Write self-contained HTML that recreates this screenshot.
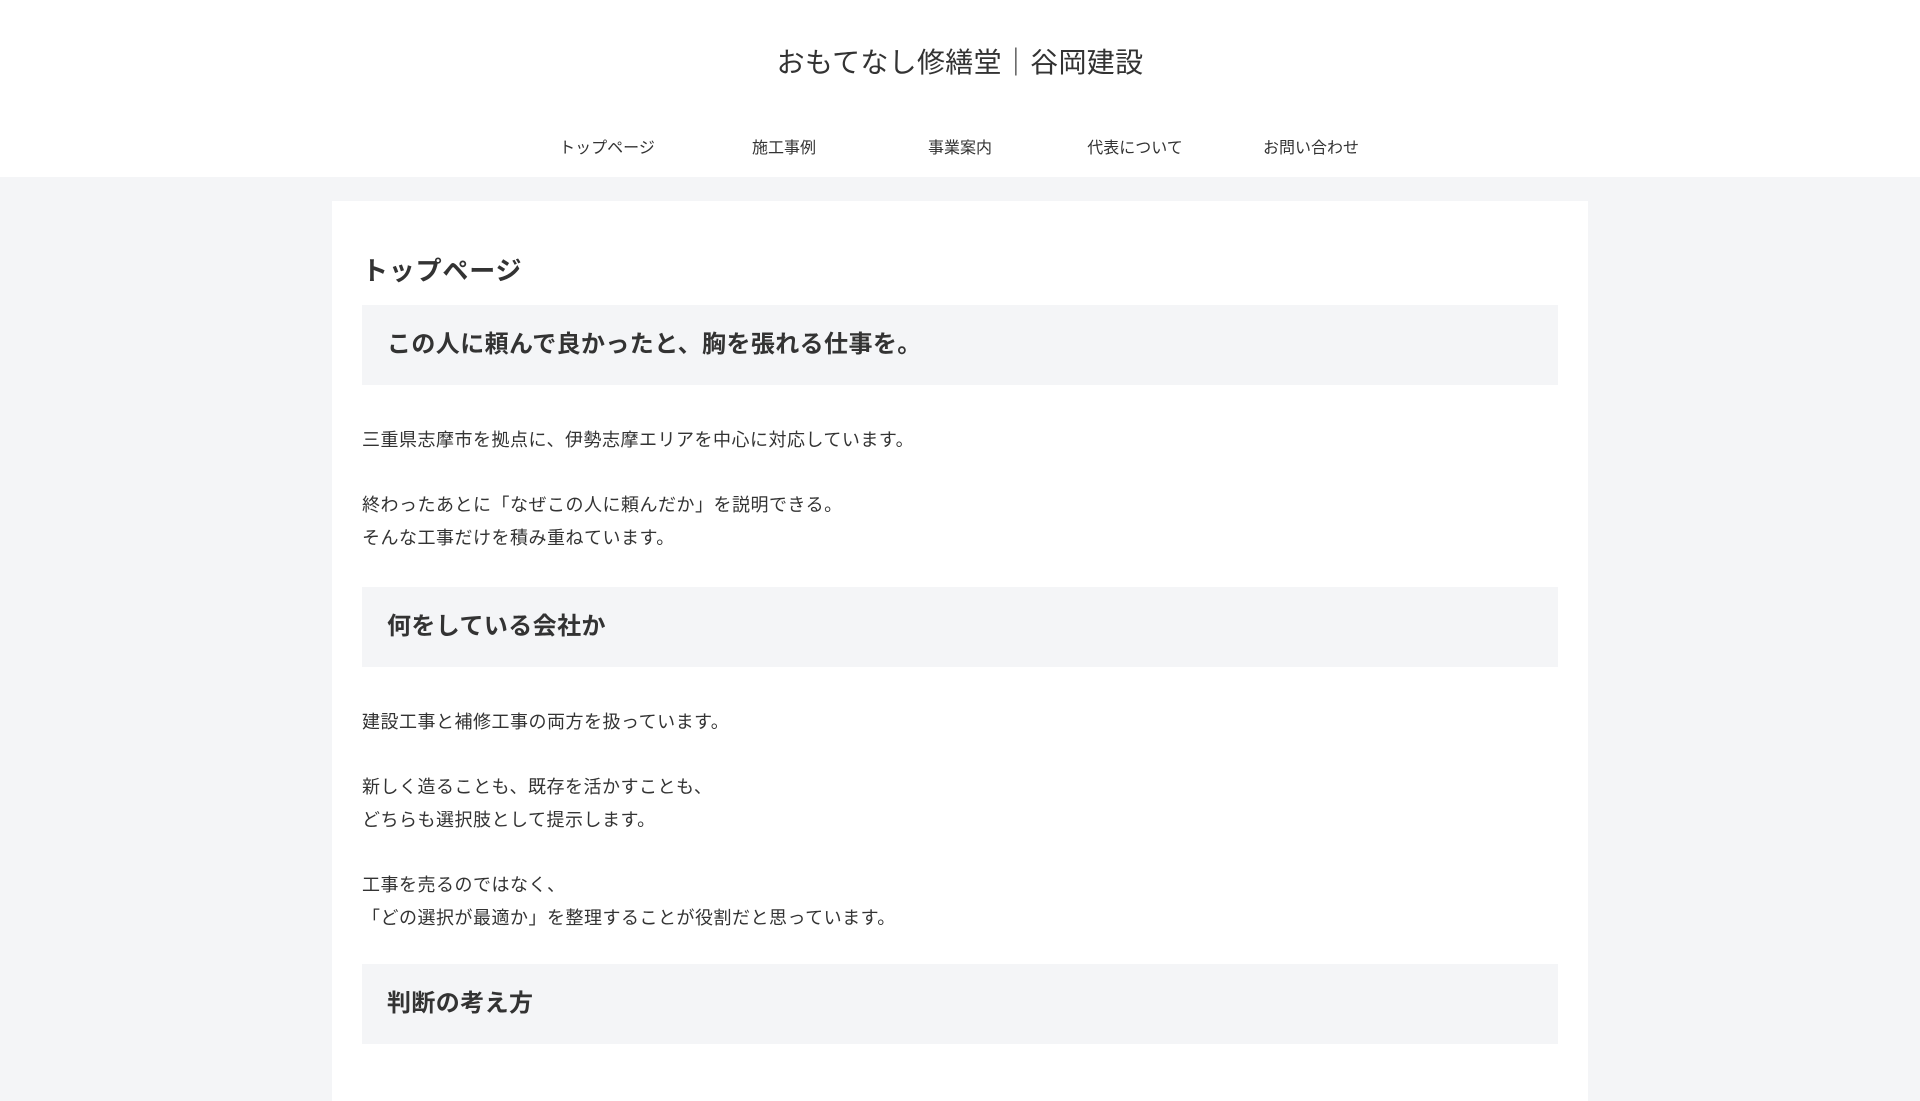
<!DOCTYPE html>
<html lang="ja"><head><meta charset="utf-8">
<style>
*{margin:0;padding:0;box-sizing:border-box}
body{width:1920px;height:1080px;overflow:hidden;background:#f4f5f7;color:#333;font-family:"Liberation Sans","Noto Sans CJK JP",sans-serif}
header{background:#fff;height:177px;position:relative}
.site{position:absolute;top:43px;left:0;width:100%;text-align:center;font-size:28px;letter-spacing:0.3px;line-height:40px;color:#333}
nav{position:absolute;top:136px;left:0;width:100%}
nav a{position:absolute;width:176px;margin-left:-88px;text-align:center;font-size:16px;line-height:26px;color:#333;text-decoration:none}
.card{position:absolute;left:332px;top:201px;width:1256px;height:900px;background:#fff;padding:0 30px}
h1{font-size:26px;font-weight:bold;margin-top:53px;line-height:34px;letter-spacing:0.8px}
h2{background:#f4f5f7;height:80px;font-size:24px;font-weight:bold;line-height:80px;padding-left:25px;margin-top:17px;margin-bottom:39px;letter-spacing:0.4px}
h2.n{margin-top:32px}
h2.m{margin-top:29px}
p{font-size:18px;line-height:33px;margin-bottom:32px;letter-spacing:0.5px}
p.l{margin-bottom:29px}
</style></head><body>
<header>
<div class="site">おもてなし修繕堂｜谷岡建設</div>
<nav>
<a style="left:607px">トップページ</a>
<a style="left:784px">施工事例</a>
<a style="left:960px">事業案内</a>
<a style="left:1135px">代表について</a>
<a style="left:1311px">お問い合わせ</a>
</nav>
</header>
<div class="card">
<h1>トップページ</h1>
<h2>この人に頼んで良かったと、胸を張れる仕事を。</h2>
<p>三重県志摩市を拠点に、伊勢志摩エリアを中心に対応しています。</p>
<p>終わったあとに「なぜこの人に頼んだか」を説明できる。<br>そんな工事だけを積み重ねています。</p>
<h2 class="n">何をしている会社か</h2>
<p>建設工事と補修工事の両方を扱っています。</p>
<p>新しく造ることも、既存を活かすことも、<br>どちらも選択肢として提示します。</p>
<p class="l">工事を売るのではなく、<br>「どの選択が最適か」を整理することが役割だと思っています。</p>
<h2 class="m">判断の考え方</h2>
</div>
</body></html>
